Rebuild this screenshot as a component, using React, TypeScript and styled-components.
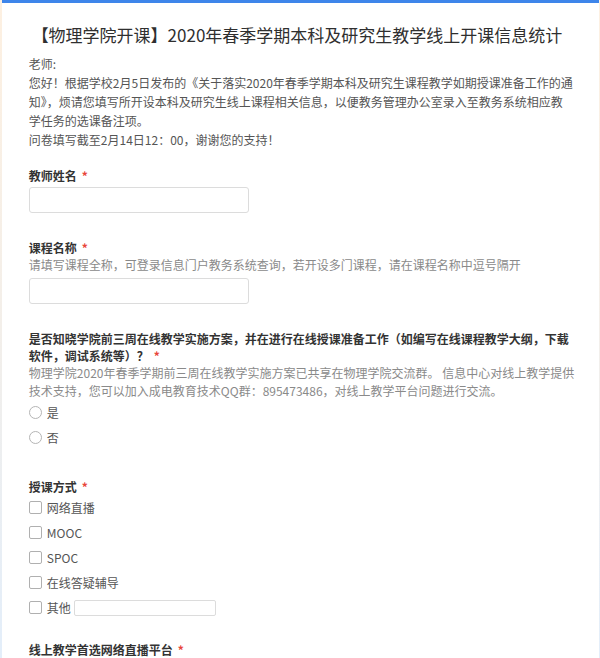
import React from "react";
import styled, { createGlobalStyle } from "styled-components";

const GlobalStyle = createGlobalStyle`
  html, body {
    margin: 0;
    padding: 0;
    overflow: hidden;
  }
  body {
    background: linear-gradient(180deg, #fdf0e1 0%, #f3efea 50%, #e3eefa 100%);
    height: 658px;
    font-family: "Noto Sans CJK SC", "Noto Sans", sans-serif;
  }
`;

const Page = styled.div`
  display: flex;
  justify-content: center;
  padding: 0 4px 0 5px;
`;

const Card = styled.main`
  flex: 1;
  background: #ffffff;
  border-top: 3px solid #3e85ea;
  padding: 19px 25px 40px 27px;
  min-height: 658px;
  box-sizing: border-box;
`;

const Title = styled.h1`
  margin: 0;
  padding-right: 9px;
  font-size: 17px;
  line-height: 26px;
  font-weight: 400;
  color: #2f2f2f;
  text-align: center;
  white-space: nowrap;
`;

const Intro = styled.p`
  margin: 6px 0 0 0;
  font-size: 12px;
  line-height: 19px;
  color: #555;
  white-space: nowrap;
`;

const Section = styled.section<{ $gap: number }>`
  margin-top: ${(p) => p.$gap}px;
`;

const Label = styled.div`
  font-size: 12px;
  line-height: 17px;
  font-weight: 700;
  color: #333;
  white-space: nowrap;
`;

const Req = styled.span`
  color: #e8453c;
  font-weight: 700;
  margin-left: 5px;
`;

const Desc = styled.div`
  font-size: 12px;
  line-height: 18px;
  color: #8a8a8a;
  white-space: nowrap;
`;

const TextInput = styled.input<{ $mt?: number }>`
  display: block;
  box-sizing: border-box;
  width: 220px;
  height: 26px;
  margin-top: ${(p) => p.$mt ?? 3}px;
  border: 1px solid #dcdcdc;
  border-radius: 3px;
  background: #fff;
  outline: none;
`;

const OptionList = styled.div`
  display: flex;
  flex-direction: column;
`;

const Option = styled.label`
  display: flex;
  align-items: center;
  height: 25px;
  font-size: 12px;
  color: #555;
`;

const Radio = styled.span`
  box-sizing: border-box;
  width: 13px;
  height: 13px;
  border: 1px solid #b5b5b5;
  border-radius: 50%;
  margin-right: 5px;
  background: #fff;
`;

const Box = styled.span`
  box-sizing: border-box;
  width: 13px;
  height: 13px;
  border: 1px solid #b0b0b0;
  border-radius: 2px;
  margin-right: 5px;
  background: #fff;
`;

const OtherInput = styled.input`
  box-sizing: border-box;
  width: 142px;
  height: 16px;
  margin-left: 3px;
  border: 1px solid #dcdcdc;
  border-radius: 2px;
  outline: none;
`;

export default function App() {
  return (
    <>
      <GlobalStyle />
      <Page>
        <Card>
          <Title>【物理学院开课】2020年春季学期本科及研究生教学线上开课信息统计</Title>
          <Intro>
            老师:
            <br />
            您好！根据学校2月5日发布的《关于落实2020年春季学期本科及研究生课程教学如期授课准备工作的通
            <br />
            知》，烦请您填写所开设本科及研究生线上课程相关信息，以便教务管理办公室录入至教务系统相应教
            <br />
            学任务的选课备注项。
            <br />
            问卷填写截至2月14日12：00，谢谢您的支持！
          </Intro>

          <Section $gap={18}>
            <Label>
              教师姓名<Req>*</Req>
            </Label>
            <TextInput $mt={3} />
          </Section>

          <Section $gap={26}>
            <Label>
              课程名称<Req>*</Req>
            </Label>
            <Desc>请填写课程全称，可登录信息门户教务系统查询，若开设多门课程，请在课程名称中逗号隔开</Desc>
            <TextInput $mt={4} />
          </Section>

          <Section $gap={26}>
            <Label>
              是否知晓学院前三周在线教学实施方案，并在进行在线授课准备工作（如编写在线课程教学大纲，下载
              <br />
              软件，调试系统等）？<Req>*</Req>
            </Label>
            <Desc>
              物理学院2020年春季学期前三周在线教学实施方案已共享在物理学院交流群。 信息中心对线上教学提供
              <br />
              技术支持，您可以加入成电教育技术QQ群：895473486，对线上教学平台问题进行交流。
            </Desc>
            <OptionList>
              <Option>
                <Radio />是
              </Option>
              <Option>
                <Radio />否
              </Option>
            </OptionList>
          </Section>

          <Section $gap={28}>
            <Label>
              授课方式<Req>*</Req>
            </Label>
            <OptionList>
              <Option>
                <Box />网络直播
              </Option>
              <Option>
                <Box />MOOC
              </Option>
              <Option>
                <Box />SPOC
              </Option>
              <Option>
                <Box />在线答疑辅导
              </Option>
              <Option>
                <Box />其他
                <OtherInput />
              </Option>
            </OptionList>
          </Section>

          <Section $gap={21}>
            <Label>
              线上教学首选网络直播平台<Req>*</Req>
            </Label>
          </Section>
        </Card>
      </Page>
    </>
  );
}
